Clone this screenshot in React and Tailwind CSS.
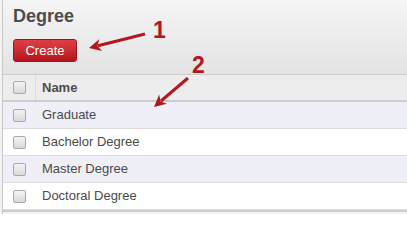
import React from "react";

const rows = ["Graduate", "Bachelor Degree", "Master Degree", "Doctoral Degree"];

const Check = () => (
    <span className="block w-[13px] h-[13px] rounded-[2px] border border-[#a9a9a9] bg-gradient-to-b from-[#f4f4f4] to-[#d9d9d9]" />
);

const Annotations = () => (
    <svg className="absolute inset-0 pointer-events-none" width="407" height="214">
        <g fill="#b1191f" stroke="#b1191f">
            <line x1="145" y1="34" x2="98" y2="45.7" strokeWidth="3" />
            <polygon points="89,48 102.1,50.9 97.5,45.9 99.2,39.3" stroke="none" />
            <line x1="188" y1="78" x2="161" y2="101" strokeWidth="3" />
            <polygon points="154,107 167,103.8 160.6,101.4 159.2,94.6" stroke="none" />
        </g>
        <text x="153" y="38" fill="#b1191f" fontSize="23" fontWeight="bold" fontFamily="Liberation Sans, Arial, sans-serif">1</text>
        <text x="192" y="73" fill="#b1191f" fontSize="23" fontWeight="bold" fontFamily="Liberation Sans, Arial, sans-serif">2</text>
    </svg>
);

export default function App() {
    return (
        <div className="relative w-[407px] h-[214px] overflow-hidden bg-[#f3f3f3] pl-[2px] font-['Liberation_Sans',Arial,sans-serif]">
            <div className="h-full border-l border-[#c8c8c8] bg-white">
                <div className="h-[74px] bg-gradient-to-b from-[#f5f5f5] to-[#e3e3e3] pl-[10px] pt-[4px]">
                    <h1 className="text-[18px] leading-[24px] font-bold text-[#4c4c4c]">Degree</h1>
                    <button className="mt-[11px] h-[23px] w-[64px] rounded-[3px] border border-[#9c1418] bg-gradient-to-b from-[#df3f44] to-[#b3161c] text-[13px] text-white leading-none">
                        Create
                    </button>
                </div>
                <div className="flex h-[28px] items-center border-t border-b-2 border-[#cccccc] bg-[#ededed]">
                    <div className="flex h-full w-[33px] items-center border-r border-[#dcdcdc] pl-[10px]">
                        <Check />
                    </div>
                    <span className="pl-[6px] text-[13px] font-bold text-[#4c4c4c]">Name</span>
                </div>
                {rows.map((r, i) => (
                    <div
                        key={r}
                        className={
                            i % 2 === 0
                                ? "flex h-[27px] items-center border-b border-[#dddddd] bg-[#efeff8]"
                                : "flex h-[27px] items-center border-b border-[#dddddd] bg-white"
                        }
                    >
                        <div className="w-[33px] pl-[10px]">
                            <Check />
                        </div>
                        <span className="pl-[6px] text-[13px] text-[#4a4a4a]">{r}</span>
                    </div>
                ))}
                <div className="border-t-2 border-[#cccccc] h-[4px] bg-[#f3f3f3]" />
            </div>
            <Annotations />
        </div>
    );
}
